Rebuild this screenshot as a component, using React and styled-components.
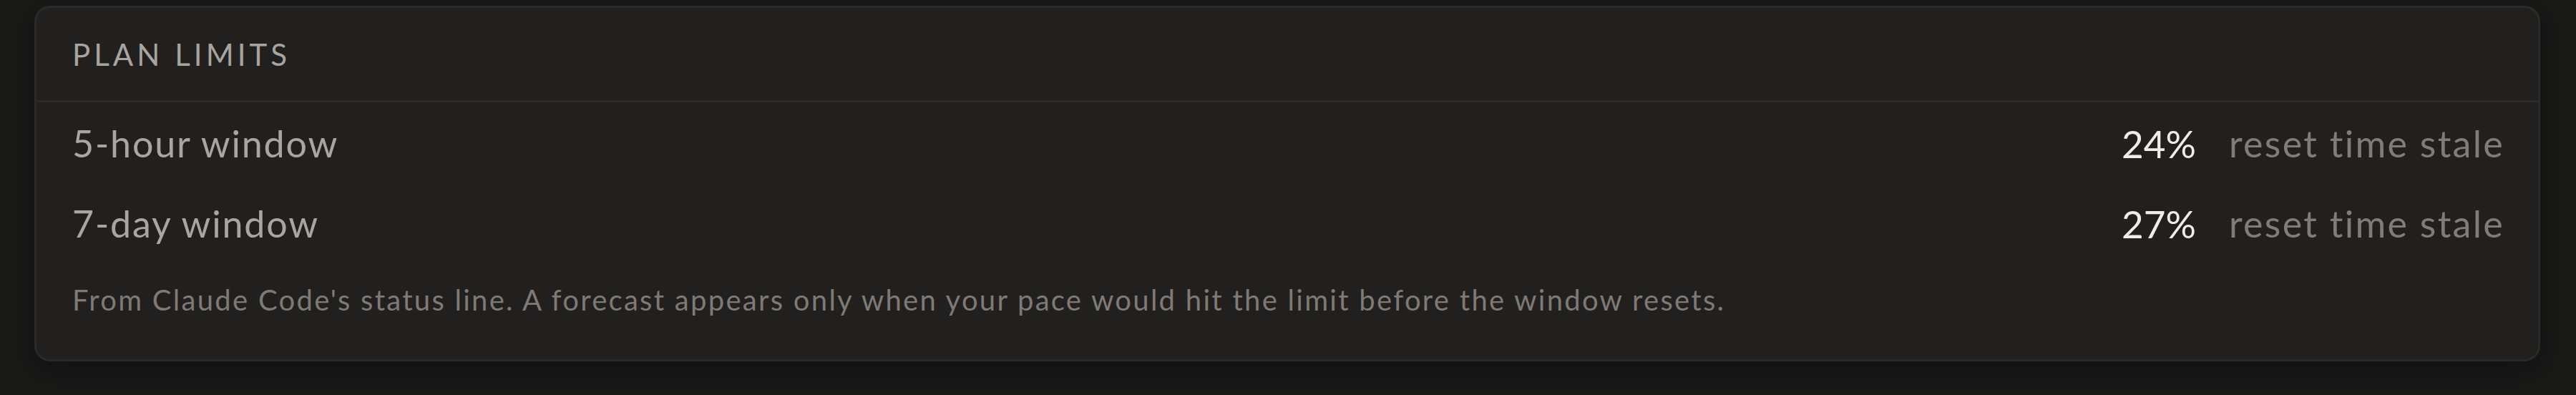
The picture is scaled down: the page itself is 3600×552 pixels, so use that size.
import React from "react";
import styled, { createGlobalStyle } from "styled-components";

const GlobalStyle = createGlobalStyle`
  html, body {
    margin: 0;
    padding: 0;
    background: #191918;
  }
  body {
    font-family: Lato, "Open Sans", sans-serif;
    -webkit-font-smoothing: antialiased;
  }
`;

const Page = styled.div`
  padding: 8px 50px 47px 48px;
`;

const Card = styled.section`
  background: #21201f;
  border: 3px solid #2b2a29;
  border-radius: 22px;
  box-shadow: 0 10px 40px rgba(0, 0, 0, 0.35);
`;

const Header = styled.header`
  height: 129px;
  display: flex;
  align-items: center;
  padding: 0 50px;
  border-bottom: 3px solid #2b2a29;
`;

const Title = styled.h2`
  margin: 0;
  font-size: 42px;
  font-weight: 400;
  letter-spacing: 0.12em;
  color: #a8a49e;
  text-transform: uppercase;
`;

const Body = styled.div`
  padding: 1px 47px 55px 50px;
`;

const Row = styled.div`
  height: 112px;
  display: flex;
  align-items: center;
  justify-content: space-between;
`;

const Label = styled.span`
  font-size: 52px;
  letter-spacing: 0.035em;
  color: #aaa69f;
`;

const Values = styled.div`
  display: flex;
  align-items: center;
  gap: 46px;
`;

const Percent = styled.span`
  font-size: 53px;
  color: #efedea;
  font-variant-numeric: tabular-nums;
`;

const Status = styled.span`
  font-size: 52px;
  letter-spacing: 0.044em;
  color: #817c76;
`;

const Note = styled.p`
  margin: 23px 0 0;
  line-height: 56px;
  font-size: 40px;
  letter-spacing: 0.057em;
  color: #7f7a74;
`;

const limits = [
  { label: "5-hour window", pct: "24%" },
  { label: "7-day window", pct: "27%" },
];

const App = () => {
  return (
    <Page>
      <GlobalStyle />
      <Card>
        <Header>
          <Title>Plan Limits</Title>
        </Header>
        <Body>
          {limits.map((item) => (
            <Row key={item.label}>
              <Label>{item.label}</Label>
              <Values>
                <Percent>{item.pct}</Percent>
                <Status>reset time stale</Status>
              </Values>
            </Row>
          ))}
          <Note>
            From Claude Code's status line. A forecast appears only when your
            pace would hit the limit before the window resets.
          </Note>
        </Body>
      </Card>
    </Page>
  );
};

export default App;
